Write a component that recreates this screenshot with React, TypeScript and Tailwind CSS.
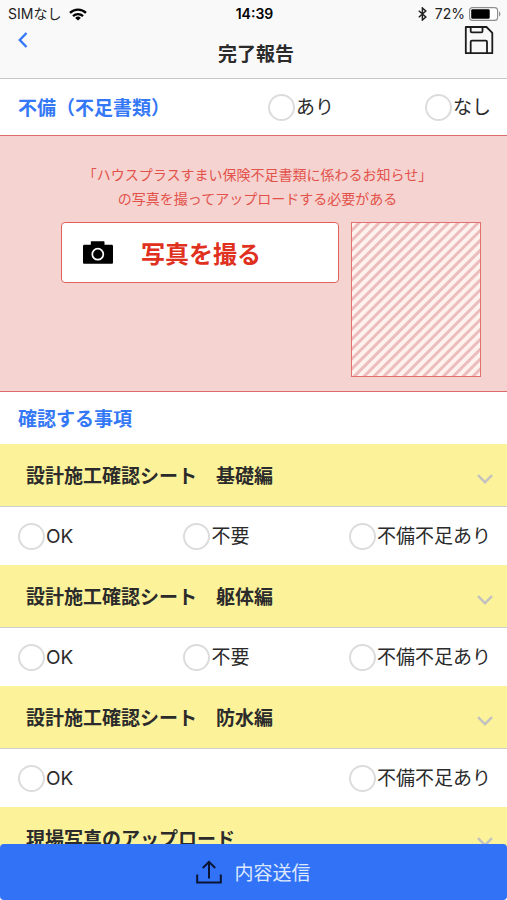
import React, { useState } from 'react';

const ChevronLeft = () => (
  <svg width="10" height="16" viewBox="0 0 10 16" fill="none" stroke="#3478f6" strokeWidth="2.4">
    <path d="M8.5 1 1.8 8l6.7 7" />
  </svg>
);

const ChevronDown = () => (
  <svg width="16" height="10" viewBox="0 0 16 10" fill="none" stroke="#c4c2c0" strokeWidth="2.4">
    <path d="M1 1.2 8 8.2l7-7" />
  </svg>
);

const WifiIcon = () => (
  <svg width="18" height="13" viewBox="0 0 18 13" fill="none" stroke="#000" strokeWidth="2.3">
    <path d="M1 4.9a11.4 11.4 0 0 1 16 0" />
    <path d="M4 8.1a7.2 7.2 0 0 1 10 0" />
    <path d="M9 12.6 6.2 9.9a4 4 0 0 1 5.6 0z" fill="#000" stroke="none" />
  </svg>
);

const BluetoothIcon = () => (
  <svg width="9" height="14" viewBox="0 0 9 14" fill="none" stroke="#222" strokeWidth="1.5">
    <path d="M.8 3.8 7.8 10 4.4 13V1l3.4 3L.8 10.2" />
  </svg>
);

const BatteryIcon = () => (
  <svg width="32" height="14" viewBox="0 0 32 14">
    <rect x=".6" y=".6" width="28" height="12.8" rx="3" fill="#fff" stroke="#8d8d8d" strokeWidth="1.1" />
    <rect x="2.2" y="2.2" width="18.5" height="9.6" rx="1.4" fill="#000" />
    <path d="M30 4.6c1.8.5 1.8 4.3 0 4.8z" fill="#8d8d8d" />
  </svg>
);

const SaveIcon = () => (
  <svg width="30" height="30" viewBox="0 0 30 30" fill="none" stroke="#1c1c1c" strokeWidth="1.8" strokeLinejoin="round">
    <path d="M1.800 1H22.500l5.800 5.800V27.200H1.800z" />
    <path d="M6.700 1v4.200c0 .8.400 1.200 1.200 1.200h9.400c.8 0 1.200-.4 1.200-1.200V1" />
    <path d="M6.700 27.200V15.800c0-.8.400-1.200 1.200-1.200h13.900c.8 0 1.200.4 1.200 1.200v11.400" />
  </svg>
);

const CameraIcon = () => (
  <svg width="30" height="23" viewBox="0 0 30 23">
    <path d="M1.500 3.800H7.800V1.300c0-.7.300-1 1-1H20.500c.7 0 1 .3 1 1v2.500h7c1 0 1.500.5 1.500 1.500v15.900c0 1-.5 1.500-1.500 1.500h-27C.5 22.700 0 22.200 0 21.200V5.300c0-1 .5-1.500 1.500-1.500z" />
    <circle cx="14.8" cy="13.2" r="5.500" fill="none" stroke="#fff" strokeWidth="1.700" />
  </svg>
);

const UploadIcon = () => (
  <svg width="26" height="24" viewBox="0 0 26 24" fill="none" stroke="#0b1433" strokeWidth="2">
    <path d="M1.200 14.500v8h23.600v-8" />
    <path d="M13 18.500V2" />
    <path d="M6.800 8 13 1.800 19.200 8" />
  </svg>
);

type OptionProps = {
  name: string;
  label: string;
  className?: string;
};

const Option = ({ name, label, className = '' }: OptionProps) => (
  <label className={`flex items-center gap-px whitespace-nowrap ${className}`}>
    <input
      type="radio"
      name={name}
      value={label}
      className="size-[27px] appearance-none rounded-full border-2 border-[#dcdcdc] bg-white checked:border-8 checked:border-[#3172f6]"
    />
    <span>
      <span className="font-['Inter','Noto_Sans_CJK_JP',sans-serif]">{label}</span>
    </span>
  </label>
);

const sheets = [
  { id: 'foundation', title: '設計施工確認シート　基礎編', options: ['OK', '不要', '不備不足あり'] },
  { id: 'frame', title: '設計施工確認シート　躯体編', options: ['OK', '不要', '不備不足あり'] },
  { id: 'waterproof', title: '設計施工確認シート　防水編', options: ['OK', '不備不足あり'] },
  { id: 'photos', title: '現場写真のアップロード', options: [] },
];

export default function App() {
  const [closed, setClosed] = useState<string[]>([]);

  const toggle = (id: string) => {
    setClosed((prev) => (prev.includes(id) ? prev.filter((x) => x !== id) : [...prev, id]));
  };

  return (
    <div className="h-screen overflow-y-auto bg-white font-['Noto_Sans_CJK_JP',sans-serif] text-[19px] leading-7 text-[#2b2b2b] [scrollbar-width:none]">
      {/* Header */}
      <header className="border-b border-[#c6c6c6] bg-[#f9f9f9]">
        <div className="grid h-7 grid-cols-3 items-center pr-[6px] pl-2 font-['Inter','Noto_Sans_CJK_JP',sans-serif] text-sm leading-5 text-[#222]">
          <div className="flex items-center gap-2">
            <span>SIMなし</span>
            <WifiIcon />
          </div>
          <span className="text-center font-semibold text-black">14:39</span>
          <div className="flex items-center justify-end gap-1">
            <BluetoothIcon />
            <span className="pl-1">72%</span>
            <BatteryIcon />
          </div>
        </div>
        <div className="grid h-[50px] grid-cols-3 pr-[13px] pl-[18px]">
          <button type="button" aria-label="戻る" className="justify-self-start self-start pt-1">
            <ChevronLeft />
          </button>
          <h1 className="self-center text-center font-bold">完了報告</h1>
          <button type="button" aria-label="保存" className="-mt-0.5 justify-self-end self-start">
            <SaveIcon />
          </button>
        </div>
      </header>

      <main>
        <div className="flex h-14 items-center gap-[91px] pr-4 pl-[18px]">
          <h2 className="flex-1 font-bold whitespace-nowrap text-[#3478f6]">不備（不足書類）</h2>
          <Option name="deficiency" label="あり" />
          <Option name="deficiency" label="なし" />
        </div>

        {/* Photo upload */}
        <section className="border-y border-[#dc6a6c] bg-[#f5d3d0] pt-[26px] pb-[14px]">
          <p className="pl-2 text-center text-sm leading-6 text-[#e2524b]">
            「ハウスプラスすまい保険不足書類に係わるお知らせ」
            <br />
            の写真を撮ってアップロードする必要がある
          </p>
          <div className="mt-3 flex items-start gap-3 pr-[26px] pl-[61px]">
            <button
              type="button"
              className="flex h-[61px] flex-1 items-center gap-7 rounded border border-[#e2605c] bg-white pl-[21px] text-2xl leading-7 font-bold text-[#e0301e]"
            >
              <CameraIcon />
              写真を撮る
            </button>
            <div className="h-[155px] w-[130px] border border-[#e2706e] bg-[repeating-linear-gradient(135deg,#fdf2ee_0px,#fdf2ee_3px,#edbdbe_4px,#edbdbe_6px,#fdf2ee_7px)]" />
          </div>
        </section>

        <h2 className="flex h-[52px] items-center pl-[18px] font-bold text-[#3478f6]">確認する事項</h2>

        {sheets.map((sheet) => (
          <section key={sheet.id}>
            <button
              type="button"
              aria-expanded={!closed.includes(sheet.id)}
              onClick={() => toggle(sheet.id)}
              className="flex h-[63px] w-full items-center justify-between border-b border-[#cfcfcf] bg-[#fbf29a] pr-[14px] pl-[26px] font-bold"
            >
              <span>{sheet.title}</span>
              <span className="pt-2">
                <ChevronDown />
              </span>
            </button>
            {sheet.options.length > 0 && !closed.includes(sheet.id) && (
              <div className="grid h-[58px] grid-cols-[1fr_1fr_auto] items-center pr-4 pl-[18px]">
                {sheet.options.map((label) => (
                  <Option
                    key={label}
                    name={sheet.id}
                    label={label}
                    className={label === '不備不足あり' ? 'col-start-3' : ''}
                  />
                ))}
              </div>
            )}
          </section>
        ))}
      </main>

      <footer className="sticky bottom-0">
        <button
          type="button"
          className="flex h-14 w-full items-center justify-center gap-3 rounded bg-[#3172f6] text-[#dce8ff]"
        >
          <UploadIcon />
          内容送信
        </button>
      </footer>
    </div>
  );
}
